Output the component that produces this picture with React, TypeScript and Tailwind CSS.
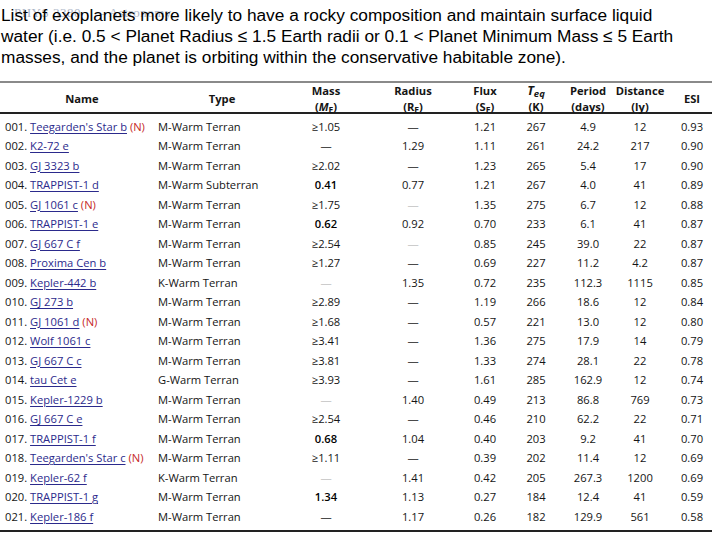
import React from "react";

type Row = {
  n: string;
  name: string;
  nova?: boolean;
  type: string;
  mass: string;
  radius: string;
  flux: string;
  teq: string;
  period: string;
  dist: string;
  esi: string;
};

const rows: Row[] = [
  { n: "001.", name: "Teegarden's Star b", nova: true, type: "M-Warm Terran", mass: "≥1.05", radius: "D", flux: "1.21", teq: "267", period: "4.9", dist: "12", esi: "0.93" },
  { n: "002.", name: "K2-72 e", type: "M-Warm Terran", mass: "D", radius: "1.29", flux: "1.11", teq: "261", period: "24.2", dist: "217", esi: "0.90" },
  { n: "003.", name: "GJ 3323 b", type: "M-Warm Terran", mass: "≥2.02", radius: "D", flux: "1.23", teq: "265", period: "5.4", dist: "17", esi: "0.90" },
  { n: "004.", name: "TRAPPIST-1 d", type: "M-Warm Subterran", mass: "0.41", radius: "0.77", flux: "1.21", teq: "267", period: "4.0", dist: "41", esi: "0.89" },
  { n: "005.", name: "GJ 1061 c", nova: true, type: "M-Warm Terran", mass: "≥1.75", radius: "L", flux: "1.35", teq: "275", period: "6.7", dist: "12", esi: "0.88" },
  { n: "006.", name: "TRAPPIST-1 e", type: "M-Warm Terran", mass: "0.62", radius: "0.92", flux: "0.70", teq: "233", period: "6.1", dist: "41", esi: "0.87" },
  { n: "007.", name: "GJ 667 C f", type: "M-Warm Terran", mass: "≥2.54", radius: "L", flux: "0.85", teq: "245", period: "39.0", dist: "22", esi: "0.87" },
  { n: "008.", name: "Proxima Cen b", type: "M-Warm Terran", mass: "≥1.27", radius: "D", flux: "0.69", teq: "227", period: "11.2", dist: "4.2", esi: "0.87" },
  { n: "009.", name: "Kepler-442 b", type: "K-Warm Terran", mass: "L", radius: "1.35", flux: "0.72", teq: "235", period: "112.3", dist: "1115", esi: "0.85" },
  { n: "010.", name: "GJ 273 b", type: "M-Warm Terran", mass: "≥2.89", radius: "D", flux: "1.19", teq: "266", period: "18.6", dist: "12", esi: "0.84" },
  { n: "011.", name: "GJ 1061 d", nova: true, type: "M-Warm Terran", mass: "≥1.68", radius: "D", flux: "0.57", teq: "221", period: "13.0", dist: "12", esi: "0.80" },
  { n: "012.", name: "Wolf 1061 c", type: "M-Warm Terran", mass: "≥3.41", radius: "D", flux: "1.36", teq: "275", period: "17.9", dist: "14", esi: "0.79" },
  { n: "013.", name: "GJ 667 C c", type: "M-Warm Terran", mass: "≥3.81", radius: "D", flux: "1.33", teq: "274", period: "28.1", dist: "22", esi: "0.78" },
  { n: "014.", name: "tau Cet e", type: "G-Warm Terran", mass: "≥3.93", radius: "D", flux: "1.61", teq: "285", period: "162.9", dist: "12", esi: "0.74" },
  { n: "015.", name: "Kepler-1229 b", type: "M-Warm Terran", mass: "L", radius: "1.40", flux: "0.49", teq: "213", period: "86.8", dist: "769", esi: "0.73" },
  { n: "016.", name: "GJ 667 C e", type: "M-Warm Terran", mass: "≥2.54", radius: "D", flux: "0.46", teq: "210", period: "62.2", dist: "22", esi: "0.71" },
  { n: "017.", name: "TRAPPIST-1 f", type: "M-Warm Terran", mass: "0.68", radius: "1.04", flux: "0.40", teq: "203", period: "9.2", dist: "41", esi: "0.70" },
  { n: "018.", name: "Teegarden's Star c", nova: true, type: "M-Warm Terran", mass: "≥1.11", radius: "D", flux: "0.39", teq: "202", period: "11.4", dist: "12", esi: "0.69" },
  { n: "019.", name: "Kepler-62 f", type: "K-Warm Terran", mass: "L", radius: "1.41", flux: "0.42", teq: "205", period: "267.3", dist: "1200", esi: "0.69" },
  { n: "020.", name: "TRAPPIST-1 g", type: "M-Warm Terran", mass: "1.34", radius: "1.13", flux: "0.27", teq: "184", period: "12.4", dist: "41", esi: "0.59" },
  { n: "021.", name: "Kepler-186 f", type: "M-Warm Terran", mass: "D", radius: "1.17", flux: "0.26", teq: "182", period: "129.9", dist: "561", esi: "0.58" },
];

const grid =
  "grid grid-cols-[152px_140px_68px_106px_38px_64px_40px_64px_40px] w-[712px]";

function Val({ v, strong }: { v: string; strong?: boolean }) {
  if (v === "D") return <span className="text-[#4a4a4a]">—</span>;
  if (v === "L") return <span className="text-[#cccccc]">—</span>;
  return <span className={strong ? "font-semibold text-black" : ""}>{v}</span>;
}

function Sub({ children }: { children: React.ReactNode }) {
  return <span className="text-[8.5px] align-[-2px] leading-none">{children}</span>;
}

export default function App() {
  return (
    <div className="relative w-[720px] h-[540px] bg-white overflow-hidden">
      <div className="absolute left-[14px] top-[3px] text-[13px] text-[#aab4c6] font-['Liberation_Serif',serif] tracking-[0.5px] whitespace-nowrap">
        PHYS 3380 <span className="ml-[14px]">– Astronomy</span>
      </div>
      <div className="relative pt-[5px] pl-[1px] font-['Liberation_Sans',Arial,sans-serif] text-[17.3px] leading-[21px] text-black">
        <div>List of exoplanets more likely to have a rocky composition and maintain surface liquid</div>
        <div>water (i.e. 0.5 &lt; Planet Radius ≤ 1.5 Earth radii or 0.1 &lt; Planet Minimum Mass ≤ 5 Earth</div>
        <div>masses, and the planet is orbiting within the conservative habitable zone).</div>
      </div>

      <div className="mt-[13px] w-[712px] font-['Open_Sans',sans-serif] text-[11.2px] text-[#151515]">
        <div className={`${grid} h-[33px] border-t-2 border-b-2 border-t-[#8a8a8a] border-b-[#222] items-center font-bold text-center`}>
          <div className="pl-[12px]">Name</div>
          <div>Type</div>
          <div className="leading-[16px]">
            <div>Mass</div>
            <div>(<span className="italic">M</span><Sub>E</Sub>)</div>
          </div>
          <div className="leading-[16px]">
            <div>Radius</div>
            <div>(R<Sub>E</Sub>)</div>
          </div>
          <div className="leading-[16px]">
            <div>Flux</div>
            <div>(S<Sub>E</Sub>)</div>
          </div>
          <div className="leading-[16px]">
            <div className="h-[16px]">
              <span className="italic text-[12.5px]">T</span>
              <span className="italic text-[9.5px] align-[-2px] leading-none">eq</span>
            </div>
            <div>(K)</div>
          </div>
          <div className="leading-[16px]">
            <div>Period</div>
            <div>(days)</div>
          </div>
          <div className="leading-[16px]">
            <div>Distance</div>
            <div>(ly)</div>
          </div>
          <div>ESI</div>
        </div>

        <div className="pt-[2.5px] pb-[4px] border-b-2 border-b-[#222]">
          {rows.map((r) => {
            const measured = r.mass !== "D" && r.mass !== "L" && !r.mass.startsWith("≥");
            return (
              <div key={r.n} className={`${grid} h-[19.5px] items-center leading-[19.5px] whitespace-nowrap`}>
                <div className="pl-[5px]">
                  {r.n}{" "}
                  <span className="text-[#2b2a8c] underline decoration-[1px] underline-offset-[2px]">{r.name}</span>
                  {r.nova && <span className="text-[#c62828]"> (N)</span>}
                </div>
                <div className="pl-[6px]">{r.type}</div>
                <div className="text-center"><Val v={r.mass} strong={measured} /></div>
                <div className="text-center"><Val v={r.radius} /></div>
                <div className="text-center">{r.flux}</div>
                <div className="text-center">{r.teq}</div>
                <div className="text-center">{r.period}</div>
                <div className="text-center">{r.dist}</div>
                <div className="text-center">{r.esi}</div>
              </div>
            );
          })}
        </div>
      </div>
    </div>
  );
}
